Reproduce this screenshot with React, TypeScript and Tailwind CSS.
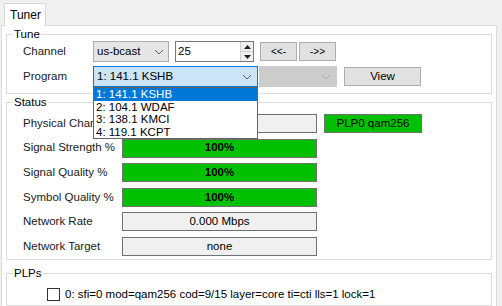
import React from "react";

const Chevron = ({ color = "#606060" }: { color?: string }) => (
  <svg width="10" height="6" viewBox="0 0 10 6" fill="none">
    <path d="M1 1 L5 5 L9 1" stroke={color} strokeWidth="1" />
  </svg>
);

const Group = ({
  label,
  className,
  children,
}: {
  label: string;
  className?: string;
  children: React.ReactNode;
}) => (
  <div className={"relative border border-[#dcdcdc] " + (className ?? "")}>
    <span className="absolute left-[6px] top-[-9px] bg-white px-[1px] text-[11.5px] leading-[16px] text-black">
      {label}
    </span>
    {children}
  </div>
);

const Bar = ({ text, green, bold }: { text: string; green?: boolean; bold?: boolean }) => (
  <div
    className={
      "flex h-[19px] w-[195px] shrink-0 items-center justify-center border border-[#707070] " +
      (green ? "bg-[#00c000] " : "bg-[#f0f0f0] ") +
      (bold ? "font-bold" : "")
    }
  >
    {text}
  </div>
);

const Row = ({ label, children }: { label: string; children: React.ReactNode }) => (
  <div className="flex h-[19px] items-center">
    <div className="w-[115px] shrink-0 overflow-hidden whitespace-nowrap pl-[16px] text-[#202020]">{label}</div>
    {children}
  </div>
);

export default function App() {
  return (
    <div className="h-[306px] w-[502px] overflow-hidden bg-[#f0f0f0] font-['Liberation_Sans',sans-serif] text-[11.5px] text-black">
      {/* tab strip */}
      <div className="flex h-[25px] items-end pl-[4px]">
        <div className="relative z-10 mb-[-1px] flex h-[23px] w-[42px] items-center border border-b-0 border-[#d9d9d9] bg-white pl-[5px] text-[12px]">
          Tuner
        </div>
      </div>
      {/* panel */}
      <div className="ml-[1px] mr-[5px] h-[290px] border border-[#dcdcdc] bg-white px-[4px] pt-[8px]">
        <Group label="Tune" className="h-[60px]">
          <div className="flex flex-col gap-[4px] pt-[6px]">
            <div className="flex h-[21px] items-center">
              <div className="w-[86px] pl-[16px] text-[#202020]">Channel</div>
              <div className="flex h-[21px] w-[76px] items-center justify-between border border-[#adadad] bg-[#e5e5e5] pl-[3px] pr-[4px]">
                <span>us-bcast</span>
                <Chevron />
              </div>
              <div className="ml-[6px] flex h-[21px] w-[79px] items-center justify-between border border-[#7a7a7a] bg-white pl-[2px]">
                <span>25</span>
                <div className="flex h-full w-[13px] flex-col border-l border-[#cfcfcf] bg-[#f0f0f0]">
                  <div className="flex flex-1 items-center justify-center border-b border-[#cfcfcf]">
                    <svg width="7" height="4" viewBox="0 0 7 4">
                      <path d="M0 4 L3.5 0 L7 4 Z" fill="#202020" />
                    </svg>
                  </div>
                  <div className="flex flex-1 items-center justify-center">
                    <svg width="7" height="4" viewBox="0 0 7 4">
                      <path d="M0 0 L3.5 4 L7 0 Z" fill="#202020" />
                    </svg>
                  </div>
                </div>
              </div>
              <div className="ml-[6px] flex h-[19px] w-[37px] items-center justify-center border border-[#adadad] bg-[#e1e1e1] text-[10px]">
                &lt;&lt;-
              </div>
              <div className="ml-[2px] flex h-[19px] w-[37px] items-center justify-center border border-[#adadad] bg-[#e1e1e1] text-[10px]">
                -&gt;&gt;
              </div>
            </div>
            <div className="flex h-[21px] items-center">
              <div className="w-[86px] pl-[16px] text-[#202020]">Program</div>
              <div className="relative">
                <div className="flex h-[21px] w-[165px] items-center justify-between border border-[#0078d7] bg-[#cce4f7] pl-[3px] pr-[5px]">
                  <span>1: 141.1 KSHB</span>
                  <Chevron />
                </div>
                <div className="absolute left-0 top-[21px] z-20 w-[165px] border border-[#646464] bg-white leading-[12.5px]">
                  <div className="bg-[#0078d7] pl-[2px] text-white">1: 141.1 KSHB</div>
                  <div className="pl-[2px]">2: 104.1 WDAF</div>
                  <div className="pl-[2px]">3: 138.1 KMCI</div>
                  <div className="pl-[2px]">4: 119.1 KCPT</div>
                </div>
              </div>
              <div className="ml-[1px] flex h-[21px] w-[78px] items-center justify-end border border-[#cccccc] bg-[#cccccc] pr-[5px]">
                <Chevron color="#a8a8a8" />
              </div>
              <div className="ml-[7px] flex h-[19px] w-[77px] items-center justify-center border border-[#adadad] bg-[#e1e1e1]">
                View
              </div>
            </div>
          </div>
        </Group>
        <Group label="Status" className="mt-[8px] h-[158px]">
          <div className="flex flex-col gap-[5.6px] pt-[11px]">
            <Row label="Physical Channel">
              <Bar text="" />
              <div className="ml-[7px] flex h-[19px] w-[98px] shrink-0 items-center justify-center border border-[#707070] bg-[#00c000]">
                PLP0 qam256
              </div>
            </Row>
            <Row label="Signal Strength %">
              <Bar text="100%" green bold />
            </Row>
            <Row label="Signal Quality %">
              <Bar text="100%" green bold />
            </Row>
            <Row label="Symbol Quality %">
              <Bar text="100%" green bold />
            </Row>
            <Row label="Network Rate">
              <Bar text="0.000 Mbps" />
            </Row>
            <Row label="Network Target">
              <Bar text="none" />
            </Row>
          </div>
        </Group>
        <Group label="PLPs" className="mt-[13px] h-[33px]">
          <div className="flex items-center gap-[5px] pl-[40px] pt-[12px]">
            <div className="h-[13px] w-[13px] border border-[#333333] bg-white" />
            <span>0: sfi=0 mod=qam256 cod=9/15 layer=core ti=cti lls=1 lock=1</span>
          </div>
        </Group>
      </div>
    </div>
  );
}
